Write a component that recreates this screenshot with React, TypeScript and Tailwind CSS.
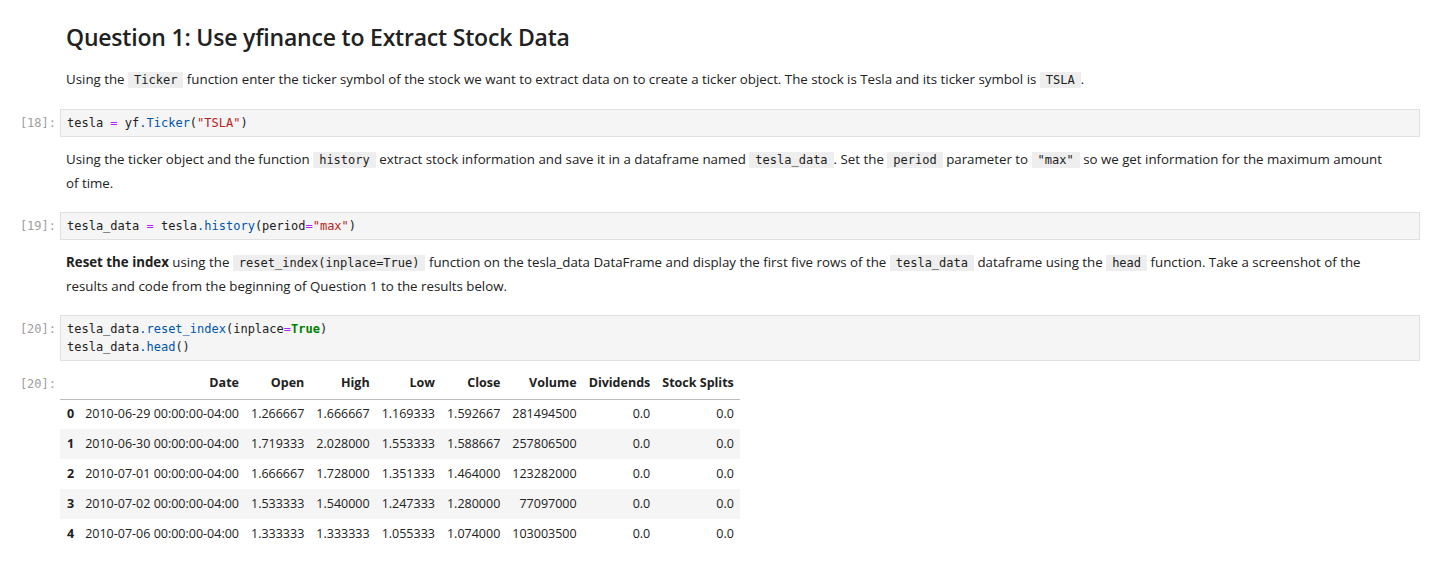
import React from "react";

const sans = "font-['Segoe_UI','Open_Sans','Noto_Sans',sans-serif]";
const mono = "font-['DejaVu_Sans_Mono','Liberation_Mono',monospace]";

function Code({ children }: { children: React.ReactNode }) {
  return (
    <code className={`${mono} text-[12px] bg-[#eeeeee] px-[6px] py-[1px] text-[#212121]`}>
      {children}
    </code>
  );
}

function Prompt({ n }: { n?: number }) {
  return (
    <div className={`${mono} w-[60px] shrink-0 pr-[4px] text-right text-[12px] leading-[18px] text-[#9e9e9e]`}>
      {n !== undefined ? `[${n}]:` : ""}
    </div>
  );
}

function CodeCell({ n, className, children }: { n: number; className?: string; children: React.ReactNode }) {
  return (
    <div className={`flex items-start ${className ?? ""}`}>
      <div className="pt-[5px]">
        <Prompt n={n} />
      </div>
      <div className={`${mono} flex-1 mr-[16px] border border-[#e0e0e0] bg-[#f5f5f5] px-[6px] py-[4px] text-[12px] leading-[18px] text-[#212121] whitespace-pre`}>
        {children}
      </div>
    </div>
  );
}

function MdCell({ className, children }: { className?: string; children: React.ReactNode }) {
  return (
    <div className={`flex ${className ?? ""}`}>
      <div className="w-[60px] shrink-0" />
      <div className="flex-1 mr-[16px] pl-[6px] pr-[28px]">{children}</div>
    </div>
  );
}

const op = "text-[#aa22ff]";
const str = "text-[#ba2121]";
const prop = "text-[#0055aa]";

const rows = [
  ["2010-06-29 00:00:00-04:00", "1.266667", "1.666667", "1.169333", "1.592667", "281494500", "0.0", "0.0"],
  ["2010-06-30 00:00:00-04:00", "1.719333", "2.028000", "1.553333", "1.588667", "257806500", "0.0", "0.0"],
  ["2010-07-01 00:00:00-04:00", "1.666667", "1.728000", "1.351333", "1.464000", "123282000", "0.0", "0.0"],
  ["2010-07-02 00:00:00-04:00", "1.533333", "1.540000", "1.247333", "1.280000", "77097000", "0.0", "0.0"],
  ["2010-07-06 00:00:00-04:00", "1.333333", "1.333333", "1.055333", "1.074000", "103003500", "0.0", "0.0"],
];

const headers = ["Date", "Open", "High", "Low", "Close", "Volume", "Dividends", "Stock Splits"];

export default function App() {
  return (
    <div className={`${sans} bg-white min-h-screen text-[13.3px] text-[#212121] pb-[20px]`}>
      <MdCell className="pt-[21px]">
        <h2 className="text-[23px] leading-[32px] font-semibold tracking-[-0.2px] text-[#212121]">
          Question 1: Use yfinance to Extract Stock Data
        </h2>
        <p className="mt-[15px] leading-[23px]">
          Using the <Code>Ticker</Code> function enter the ticker symbol of the stock we want to extract data on to
          create a ticker object. The stock is Tesla and its ticker symbol is <Code>TSLA</Code>.
        </p>
      </MdCell>

      <CodeCell n={18} className="mt-[17px]">
        tesla <span className={op}>=</span> yf<span className={prop}>.Ticker</span>(<span className={str}>"TSLA"</span>)
      </CodeCell>

      <MdCell className="mt-[11px]">
        <p className="leading-[23px]">
          Using the ticker object and the function <Code>history</Code> extract stock information and save it in a
          dataframe named <Code>tesla_data</Code>. Set the <Code>period</Code> parameter to <Code>"max"</Code> so we
          get information for the maximum amount of time.
        </p>
      </MdCell>

      <CodeCell n={19} className="mt-[17px]">
        tesla_data <span className={op}>=</span> tesla<span className={prop}>.history</span>(period
        <span className={op}>=</span>
        <span className={str}>"max"</span>)
      </CodeCell>

      <MdCell className="mt-[11px]">
        <p className="leading-[23px]">
          <b className="font-bold">Reset the index</b> using the <Code>reset_index(inplace=True)</Code> function on
          the tesla_data DataFrame and display the first five rows of the <Code>tesla_data</Code> dataframe using the{" "}
          <Code>head</Code> function. Take a screenshot of the results and code from the beginning of Question 1 to the
          results below.
        </p>
      </MdCell>

      <CodeCell n={20} className="mt-[17px]">
        {"tesla_data"}
        <span className={prop}>.reset_index</span>(inplace<span className={op}>=</span>
        <span className="text-[#008000] font-bold">True</span>){"\n"}
        {"tesla_data"}
        <span className={prop}>.head</span>()
      </CodeCell>

      <div className="flex items-start mt-[8px]">
        <div className="pt-[6px]">
          <Prompt n={20} />
        </div>
        <table className="border-collapse text-[12.5px] text-[#212121]">
          <thead>
            <tr className="border-b border-[#bdbdbd]">
              <th className="h-[30px] px-[6px]" />
              {headers.map((h) => (
                <th key={h} className="h-[30px] px-[6px] text-right font-bold">
                  {h}
                </th>
              ))}
            </tr>
          </thead>
          <tbody>
            {rows.map((r, i) => (
              <tr key={i} className={i % 2 === 1 ? "bg-[#f5f5f5]" : ""}>
                <th className="h-[30px] pl-[7px] pr-[5px] text-left font-bold">{i}</th>
                {r.map((c, j) => (
                  <td key={j} className="h-[30px] px-[6px] text-right whitespace-nowrap">
                    {c}
                  </td>
                ))}
              </tr>
            ))}
          </tbody>
        </table>
      </div>
    </div>
  );
}
